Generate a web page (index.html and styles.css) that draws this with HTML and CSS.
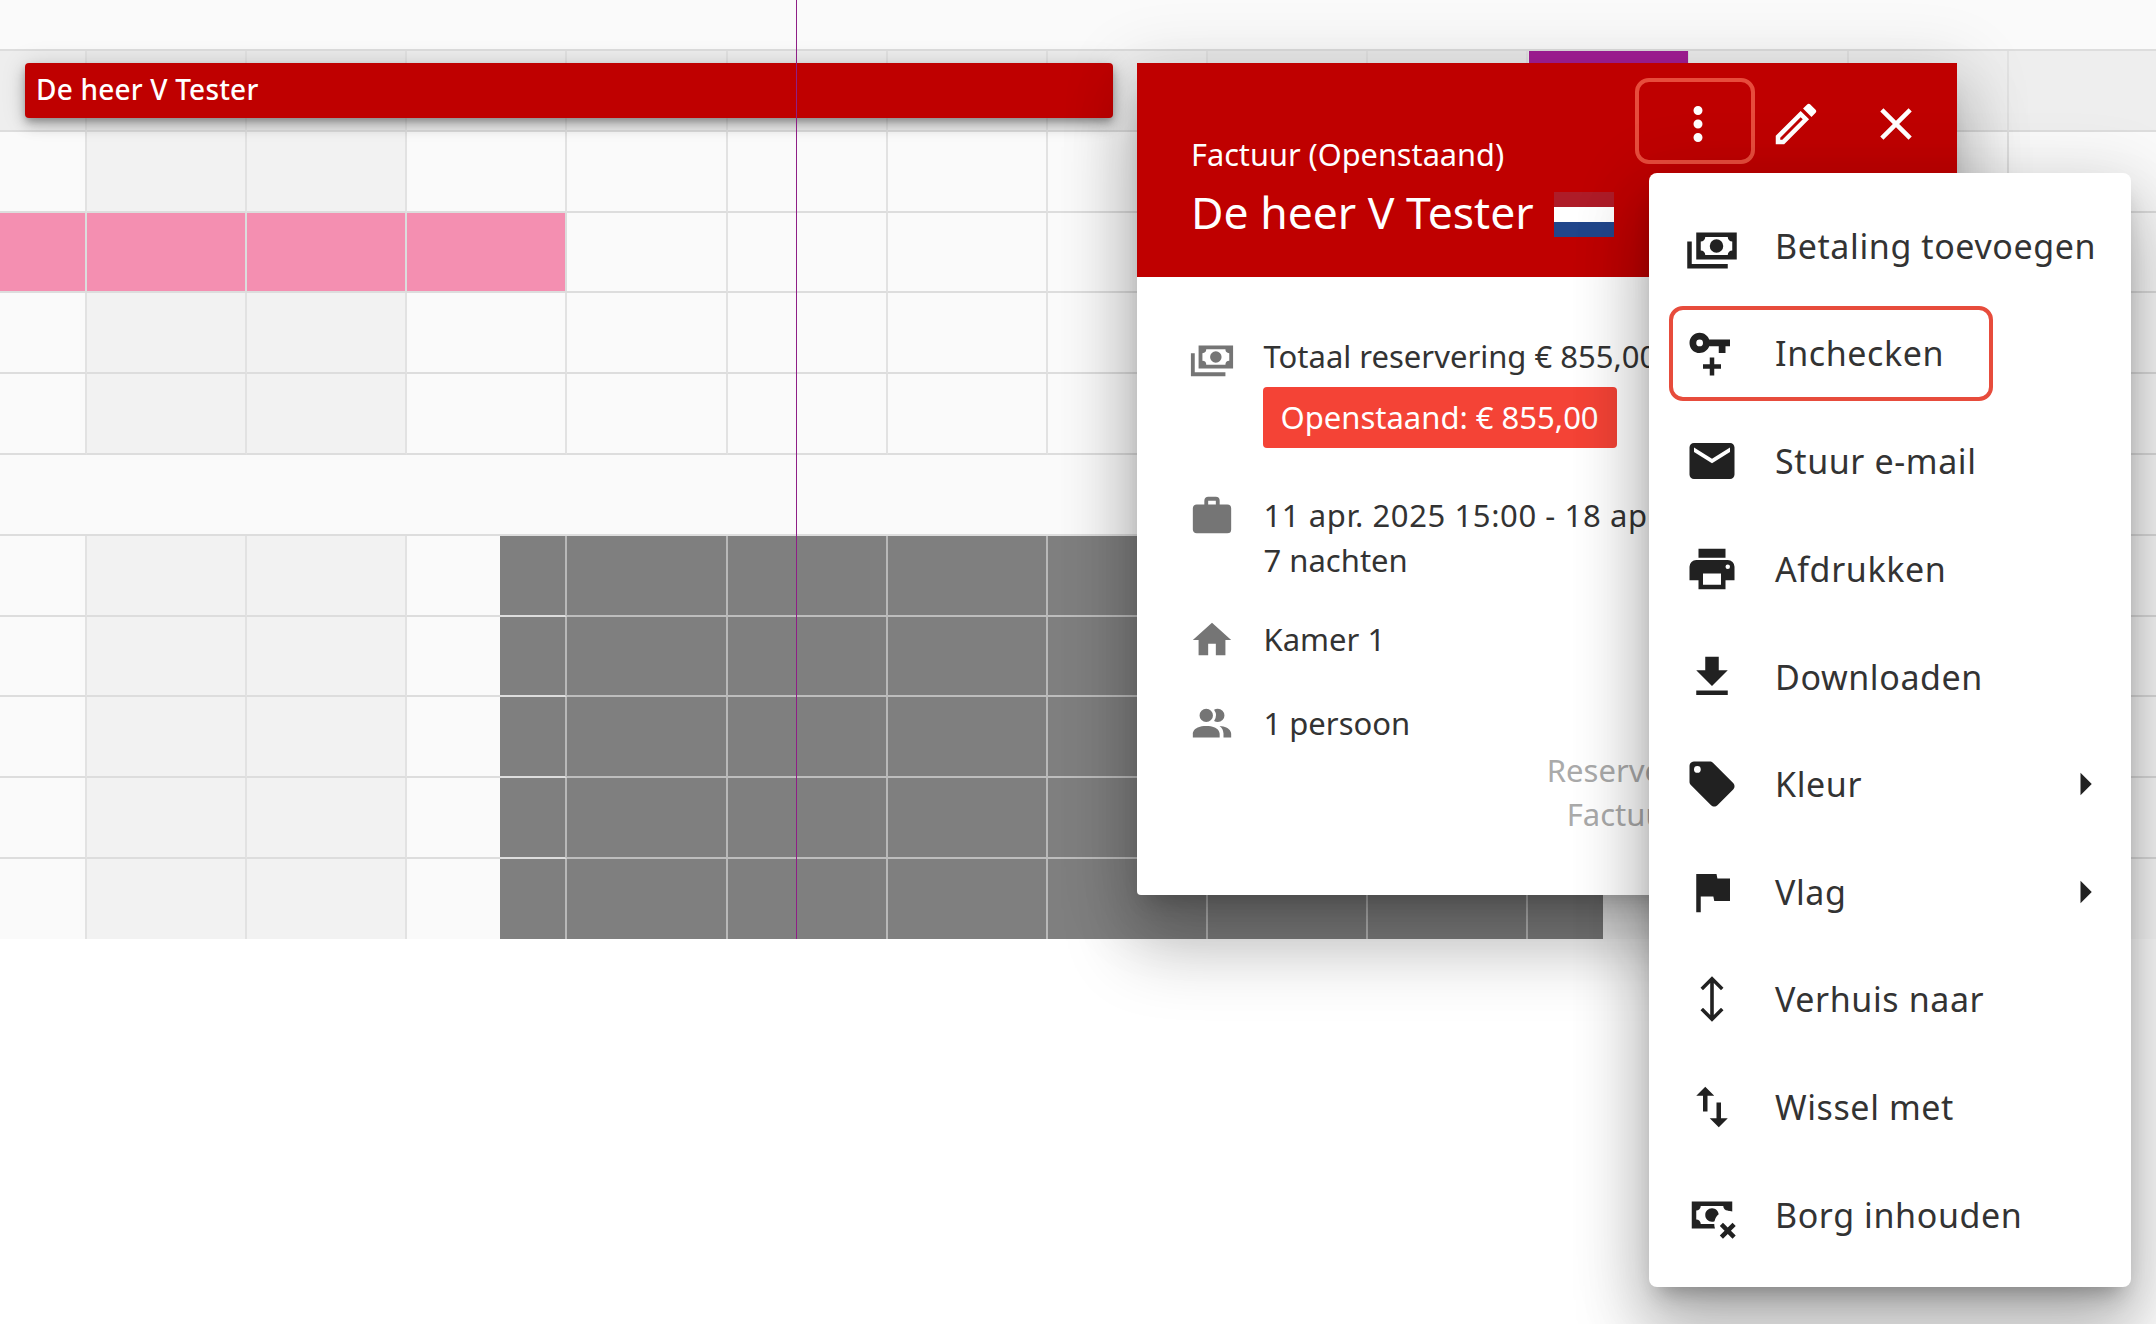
FILE: index.html
```html
<!DOCTYPE html>
<html lang="nl">
<head>
    <meta charset="UTF-8">
    <title>Factuur</title>
    <link rel="stylesheet" href="styles.css">
</head>
<body>
    <div class="planner">
        <div class="planner-top"></div>
        <div id="grid"></div>

        <div class="now-line"></div>
        <div class="event-purple"></div>
        <div class="event-bar">De heer V Tester</div>

        <div class="popup">
            <div class="popup-head">
                <div class="popup-titles">
                    <div class="popup-sub">Factuur (Openstaand)</div>
                    <div class="popup-name">
                        De heer V Tester
                        <span class="flag"><i class="flag-red"></i><i class="flag-white"></i><i class="flag-blue"></i></span>
                    </div>
                </div>
                <div class="popup-actions">
                    <button class="head-btn head-btn-active"><svg viewBox="0 0 24 24"><path d="M12,16A2,2 0 0,1 14,18A2,2 0 0,1 12,20A2,2 0 0,1 10,18A2,2 0 0,1 12,16M12,10A2,2 0 0,1 14,12A2,2 0 0,1 12,14A2,2 0 0,1 10,12A2,2 0 0,1 12,10M12,4A2,2 0 0,1 14,6A2,2 0 0,1 12,8A2,2 0 0,1 10,6A2,2 0 0,1 12,4Z"/></svg></button>
                    <button class="head-btn"><svg viewBox="0 0 24 24"><path d="M14.06,9L15,9.94L5.92,19H5V18.08L14.06,9M17.66,3C17.41,3 17.15,3.1 16.96,3.29L15.13,5.12L18.88,8.87L20.71,7.04C21.1,6.65 21.1,6 20.71,5.63L18.37,3.29C18.17,3.09 17.92,3 17.66,3M14.06,6.19L3,17.25V21H6.75L17.81,9.94L14.06,6.19Z"/></svg></button>
                    <button class="head-btn"><svg viewBox="0 0 24 24"><path d="M19,6.41L17.59,5L12,10.59L6.41,5L5,6.41L10.59,12L5,17.59L6.41,19L12,13.41L17.59,19L19,17.59L13.41,12L19,6.41Z"/></svg></button>
                </div>
            </div>
            <div class="popup-body">
                <div class="info-row info-money">
                    <svg viewBox="0 0 24 24"><path d="M5,6H23V18H5V6M14,9A3,3 0 0,1 17,12A3,3 0 0,1 14,15A3,3 0 0,1 11,12A3,3 0 0,1 14,9M9,8A2,2 0 0,1 7,10V14A2,2 0 0,1 9,16H19A2,2 0 0,1 21,14V10A2,2 0 0,1 19,8H9M1,10H3V20H19V22H1V10Z"/></svg>
                    <div class="info-text">
                        <div>Totaal reservering € 855,00</div>
                        <span class="badge">Openstaand: € 855,00</span>
                    </div>
                </div>
                <div class="info-row info-dates">
                    <svg viewBox="0 0 24 24"><path d="M10,2H14A2,2 0 0,1 16,4V6H20A2,2 0 0,1 22,8V19A2,2 0 0,1 20,21H4C2.89,21 2,20.1 2,19V8C2,6.89 2.89,6 4,6H8V4C8,2.89 8.89,2 10,2M14,6V4H10V6H14Z"/></svg>
                    <div class="info-text">
                        <div class="date-line">11 apr. 2025 15:00 - 18 apr. 2025 10:00</div>
                        <div>7 nachten</div>
                    </div>
                </div>
                <div class="info-row info-room">
                    <svg viewBox="0 0 24 24"><path d="M10,20V14H14V20H19V12H22L12,3L2,12H5V20H10Z"/></svg>
                    <div class="info-text">Kamer 1</div>
                </div>
                <div class="info-row info-guests">
                    <svg viewBox="0 0 24 24"><path d="M16 17V19H2V17S2 13 9 13 16 17 16 17M12.5 7.5A3.5 3.5 0 1 0 9 11A3.5 3.5 0 0 0 12.5 7.5M15.94 13A5.32 5.32 0 0 1 18 17V19H22V17S22 13.37 15.94 13M15 4A3.39 3.39 0 0 0 13.07 4.59A5 5 0 0 1 13.07 10.41A3.39 3.39 0 0 0 15 11A3.5 3.5 0 0 0 15 4Z"/></svg>
                    <div class="info-text">1 persoon</div>
                </div>
                <div class="popup-refs">
                    <div>Reservering</div>
                    <div>Factuurnr.:</div>
                </div>
            </div>
        </div>

        <div class="menu">
            <div class="menu-item">
                <svg viewBox="0 0 24 24"><path d="M5,6H23V18H5V6M14,9A3,3 0 0,1 17,12A3,3 0 0,1 14,15A3,3 0 0,1 11,12A3,3 0 0,1 14,9M9,8A2,2 0 0,1 7,10V14A2,2 0 0,1 9,16H19A2,2 0 0,1 21,14V10A2,2 0 0,1 19,8H9M1,10H3V20H19V22H1V10Z"/></svg>
                <span>Betaling toevoegen</span>
            </div>
            <div class="menu-item menu-item-focus">
                <svg viewBox="0 0 24 24"><path d="M6.5,3C8.46,3 10.13,4.25 10.74,6H20V9H18V12H15V9H10.74C10.13,10.75 8.46,12 6.5,12C4,12 2,10 2,7.5C2,5 4,3 6.5,3M6.5,6A1.5,1.5 0 0,0 5,7.5A1.5,1.5 0 0,0 6.5,9A1.5,1.5 0 0,0 8,7.5A1.5,1.5 0 0,0 6.5,6M8,17H11V14H13V17H16V19H13V22H11V19H8V17Z"/></svg>
                <span>Inchecken</span>
            </div>
            <div class="menu-item">
                <svg viewBox="0 0 24 24"><path d="M20,8L12,13L4,8V6L12,11L20,6M20,4H4C2.89,4 2,4.89 2,6V18A2,2 0 0,0 4,20H20A2,2 0 0,0 22,18V6C22,4.89 21.1,4 20,4Z"/></svg>
                <span>Stuur e-mail</span>
            </div>
            <div class="menu-item">
                <svg viewBox="0 0 24 24"><path d="M18,3H6V7H18M19,12A1,1 0 0,1 18,11A1,1 0 0,1 19,10A1,1 0 0,1 20,11A1,1 0 0,1 19,12M16,19H8V14H16M19,8H5A3,3 0 0,0 2,11V17H6V21H18V17H22V11A3,3 0 0,0 19,8Z"/></svg>
                <span>Afdrukken</span>
            </div>
            <div class="menu-item">
                <svg viewBox="0 0 24 24"><path d="M5,20H19V18H5M19,9H15V3H9V9H5L12,16L19,9Z"/></svg>
                <span>Downloaden</span>
            </div>
            <div class="menu-item">
                <svg viewBox="0 0 24 24"><path d="M5.5,7A1.5,1.5 0 0,1 4,5.5A1.5,1.5 0 0,1 5.5,4A1.5,1.5 0 0,1 7,5.5A1.5,1.5 0 0,1 5.5,7M21.41,11.58L12.41,2.58C12.05,2.22 11.55,2 11,2H4C2.89,2 2,2.89 2,4V11C2,11.55 2.22,12.05 2.59,12.41L11.58,21.41C11.95,21.77 12.45,22 13,22C13.55,22 14.05,21.77 14.41,21.41L21.41,14.41C21.78,14.05 22,13.55 22,13C22,12.44 21.77,11.94 21.41,11.58Z"/></svg>
                <span>Kleur</span>
                <svg class="menu-arrow" viewBox="0 0 24 24"><path d="M10,17L15,12L10,7V17Z"/></svg>
            </div>
            <div class="menu-item">
                <svg viewBox="0 0 24 24"><path d="M14.4,6L14,4H5V21H7V14H12.6L13,16H20V6H14.4Z"/></svg>
                <span>Vlag</span>
                <svg class="menu-arrow" viewBox="0 0 24 24"><path d="M10,17L15,12L10,7V17Z"/></svg>
            </div>
            <div class="menu-item">
                <svg viewBox="0 0 24 24"><path d="M11.2,4.9L8,8.1L6.9,7L12,1.9L17.1,7L16,8.1L12.8,4.9V19.1L16,15.9L17.1,17L12,22.1L6.9,17L8,15.9L11.2,19.1V4.9Z"/></svg>
                <span>Verhuis naar</span>
            </div>
            <div class="menu-item">
                <svg viewBox="0 0 24 24"><path d="M9,3L5,7H8V14H10V7H13M16,17V10H14V17H11L15,21L19,17H16Z"/></svg>
                <span>Wissel met</span>
            </div>
            <div class="menu-item">
                <svg viewBox="0 0 24 24"><path d="M3 6V18H13.32C13.1 17.33 13 16.66 13 16H7C7 14.9 6.11 14 5 14V10C6.11 10 7 9.11 7 8H17C17 9.11 17.9 10 19 10V10.06C19.67 10.06 20.34 10.18 21 10.4V6H3M12 9C10.3 9.03 9 10.3 9 12C9 13.7 10.3 14.94 12 15C12.38 15 12.77 14.92 13.14 14.77C13.41 13.67 13.86 12.63 14.97 11.7C14.85 10.28 13.59 8.97 12 9M21.12 15.46L19 17.59L16.88 15.47L15.47 16.88L17.59 19L15.47 21.12L16.88 22.54L19 20.41L21.12 22.54L22.54 21.12L20.41 19L22.54 16.88L21.12 15.46Z"/></svg>
                <span>Borg inhouden</span>
            </div>
        </div>
    </div>
    <script src="grid.js"></script>
</body>
</html>
```
FILE: styles.css
```css
body {
    margin: 0;
    background-color: white;
    font-family: "Noto Sans", "Open Sans", sans-serif;
    overflow: hidden;
}

.planner {
    position: relative;
    width: 2156px;
    height: 1324px;
    overflow: hidden;
}

.planner-top {
    height: 49px;
    background-color: #fafafa;
    border-bottom: 2px solid #ddd;
}

.row {
    box-sizing: border-box;
    display: grid;
    grid-template-columns: 87px repeat(13, 160.17px);
    height: 80.8px;
    background-color: #fafafa;
}

.row-first {
    background-color: #eeeeee;
}

.row-empty {
    border-bottom: 2px solid #ddd;
}

.row:last-child {
    height: 80px;
}

.row:last-child .cell {
    border-bottom: none;
}

.cell {
    box-sizing: border-box;
    border-right: 2px solid #e2e2e2;
    border-bottom: 2px solid #ddd;
}

.weekend {
    background-color: #f2f2f2;
}

.row-first .weekend {
    background-color: #ebebeb;
}

.pink {
    background-color: #f48fb1;
    border-right-color: #dcdcdc;
}

.dark {
    background-color: #7f7f7f;
    border-right-color: #b8b8b8;
    border-bottom-color: #bdbdbd;
}

/* cell where the dark block starts halfway */
.dark-from {
    background: linear-gradient(to right, #fafafa 93px, #7f7f7f 93px);
    border-right-color: #b8b8b8;
}

.dark-to {
    background: linear-gradient(to right, #7f7f7f 75px, #fafafa 75px);
    border-right: none;
}

.now-line {
    position: absolute;
    left: 796px;
    top: 0;
    width: 1px;
    height: 939px;
    background-color: #8e1f86;
    z-index: 3;
}

.event-purple {
    position: absolute;
    left: 1529px;
    top: 51px;
    width: 159px;
    height: 30px;
    background-color: #a31e96;
}

.event-bar {
    position: absolute;
    left: 25px;
    top: 63px;
    box-sizing: border-box;
    width: 1088px;
    height: 55px;
    padding-left: 11px;
    line-height: 53px;
    font-size: 28px;
    font-weight: 500;
    letter-spacing: 0.2px;
    color: white;
    background-color: #bf0000;
    border-radius: 4px;
    box-shadow: 0 4px 7px -1px rgba(0,0,0,0.25), 0 8px 14px 0 rgba(0,0,0,0.18), 0 1px 25px 0 rgba(0,0,0,0.15);
    z-index: 2;
}

.popup {
    position: absolute;
    left: 1137px;
    top: 63px;
    width: 820px;
    height: 832px;
    background-color: white;
    border-radius: 0 0 4px 4px;
    box-shadow: 0 15px 21px -10px rgba(0,0,0,0.2), 0 50px 70px 5px rgba(0,0,0,0.22), 0 13px 69px 12px rgba(0,0,0,0.12);
    z-index: 4;
}

.popup-head {
    display: flex;
    justify-content: space-between;
    height: 214px;
    background-color: #bf0000;
    color: white;
}

.popup-titles {
    padding: 70px 0 0 54px;
}

.popup-sub {
    font-size: 30.7px;
    line-height: 43px;
}

.popup-name {
    display: flex;
    align-items: center;
    gap: 20px;
    margin-top: 6px;
    font-size: 44.5px;
    line-height: 60px;
}

.flag {
    display: flex;
    flex-direction: column;
    width: 60px;
    height: 45px;
    margin-top: 4px;
}

.flag i {
    flex: 1;
}

.flag-red { background-color: #ae1c28; }
.flag-white { background-color: white; }
.flag-blue { background-color: #21468b; }

.popup-actions {
    display: flex;
    align-items: flex-start;
    padding: 15px 11px 0 0;
}

.head-btn {
    box-sizing: border-box;
    width: 100px;
    height: 86px;
    padding: 6px 0 0;
    border: none;
    background: none;
    display: flex;
    align-items: center;
    justify-content: center;
}

.head-btn svg {
    width: 54px;
    height: 54px;
    fill: white;
}

.head-btn-active {
    width: 120px;
    padding-left: 6px;
    margin-right: -9px;
    border: 4px solid #e74c3c;
    border-radius: 14px;
}

.popup-body {
    padding: 57px 0 0 52px;
    font-size: 31px;
    color: #333;
}

.info-row {
    display: flex;
    gap: 28.5px;
    white-space: nowrap;
}

.info-row svg {
    flex: none;
    width: 46px;
    height: 46px;
    fill: #757575;
}

.info-text {
    line-height: 45px;
}

.date-line {
    letter-spacing: 0.6px;
}

.info-dates {
    margin-top: 45px;
}

.info-room {
    margin-top: 34px;
}

.info-guests {
    margin-top: 38px;
}

.badge {
    display: inline-block;
    height: 61px;
    margin: 8px 0 0 -1px;
    padding: 0 18px;
    line-height: 61px;
    color: white;
    background-color: #f44336;
    border-radius: 4px;
}

.popup-refs {
    margin-top: 1px;
    padding-right: 236px;
    text-align: right;
    line-height: 44px;
    color: #aaa;
}

.menu {
    position: absolute;
    left: 1649px;
    top: 173px;
    box-sizing: border-box;
    width: 482px;
    height: 1114px;
    padding: 19px 0;
    background-color: white;
    border-radius: 8px;
    box-shadow: 0 15px 21px -10px rgba(0,0,0,0.3), 0 50px 70px 5px rgba(0,0,0,0.22), 0 13px 69px 12px rgba(0,0,0,0.12);
    z-index: 5;
}

.menu-item {
    box-sizing: border-box;
    display: flex;
    align-items: center;
    height: 107.6px;
    padding-left: 36px;
    font-size: 34px;
    letter-spacing: 0.6px;
    color: #333;
}

.menu-item svg {
    flex: none;
    width: 54px;
    height: 54px;
    fill: #212121;
    margin-right: 36px;
}

.menu-item .menu-arrow {
    margin: 0 19px 0 auto;
}

.menu-item-focus {
    width: 324px;
    height: 95px;
    margin: 6px 0 7px 20px;
    padding-left: 12px;
    border: 4px solid #e74c3c;
    border-radius: 14px;
}
```
FILE: grid.js
```js
// rows 1-5 and 7-11 have day cells, row 6 is a group header
let grid = document.getElementById('grid');

function addRow(rowNr) {
    let row = document.createElement('div');
    row.className = 'row';
    if (rowNr === 1) row.className += ' row-first';
    if (rowNr === 6) {
        row.className += ' row-empty';
        grid.appendChild(row);
        return;
    }
    for (let col = 0; col < 14; col++) {
        let cell = document.createElement('div');
        cell.className = 'cell';
        if (rowNr === 3 && col < 4) {
            cell.className += ' pink';
        } else if (rowNr > 6 && col === 3) {
            cell.className += ' dark-from';
        } else if (rowNr > 6 && col > 3 && col < 10) {
            cell.className += ' dark';
        } else if (rowNr > 6 && col === 10) {
            cell.className += ' dark-to';
        } else if (col === 1 || col === 2 || col === 8 || col === 9) {
            cell.className += ' weekend';
        }
        row.appendChild(cell);
    }
    grid.appendChild(row);
}

for (let i = 1; i <= 11; i++) {
    addRow(i);
}
```
